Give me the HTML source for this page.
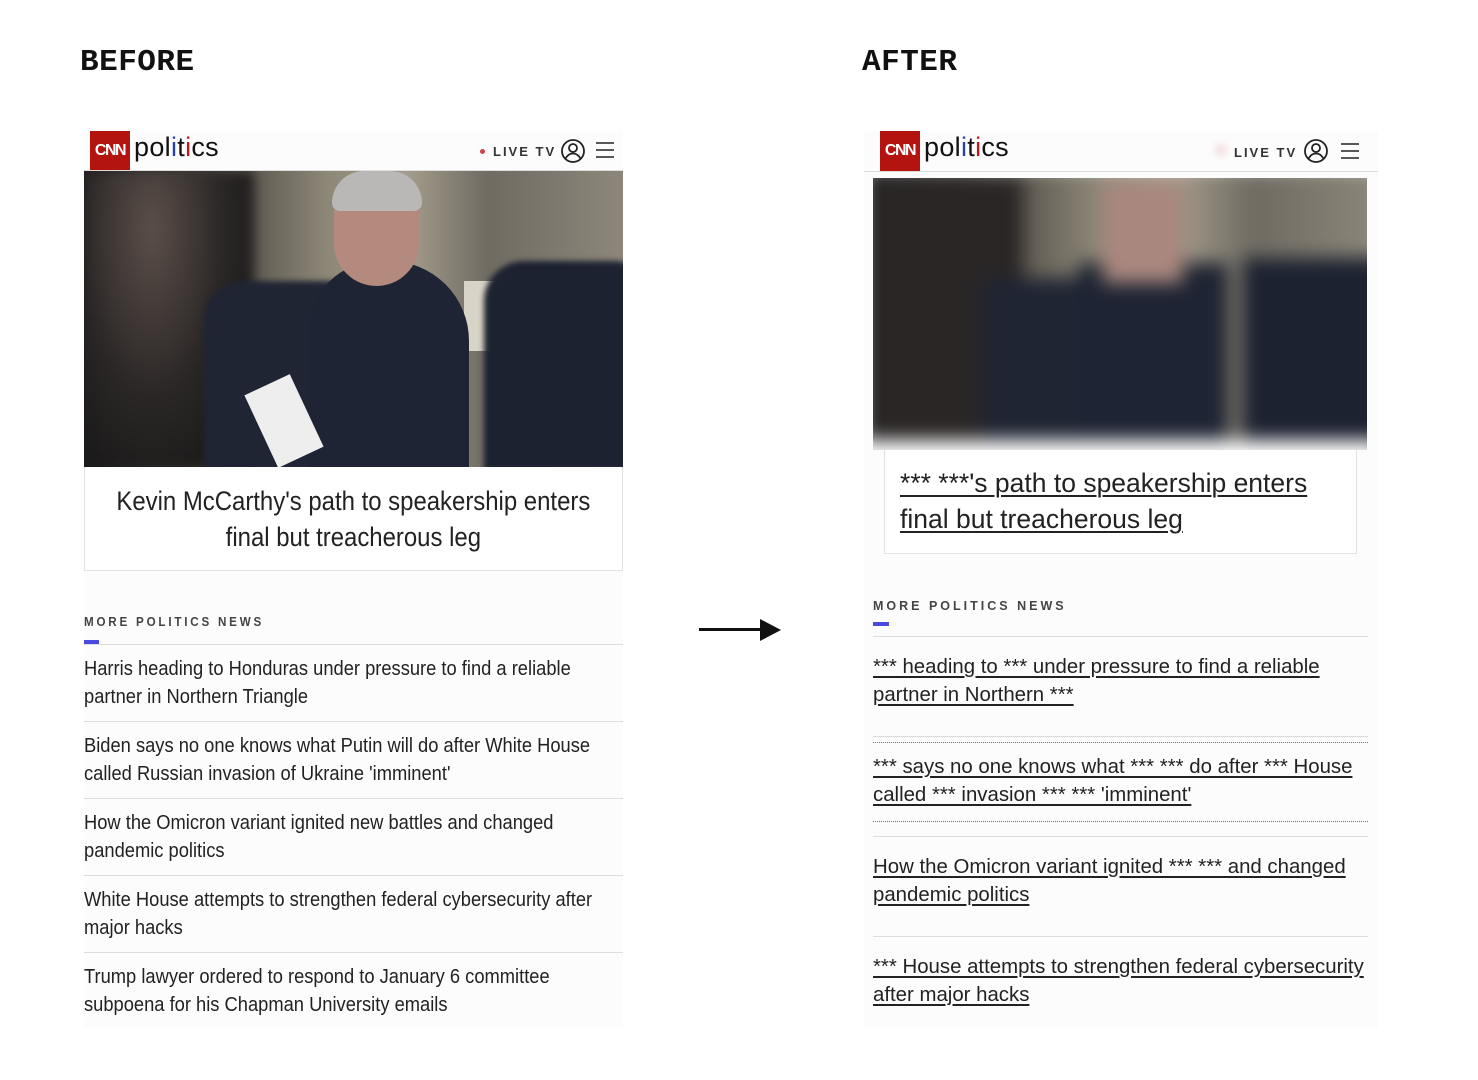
<!DOCTYPE html>
<html><head><meta charset="utf-8"><style>
*{margin:0;padding:0;box-sizing:border-box}
body{width:1478px;height:1080px;background:#fff;position:relative;overflow:hidden;font-family:"Liberation Sans",sans-serif;color:#222}
.a{position:absolute}
.title{font-family:"Liberation Mono",monospace;font-weight:bold;font-size:31px;color:#111;top:45px;letter-spacing:0.5px}
.panel{background:#fcfcfc}
.logo{background:#b3140f;color:#fff;font-weight:bold;font-size:16px;display:flex;align-items:center;justify-content:center;letter-spacing:-1.5px}
.pol{font-size:27px;color:#111;letter-spacing:0.3px}
.live{font-size:13px;font-weight:bold;letter-spacing:2px;color:#333}
.nar{transform:scaleX(0.916);transform-origin:0 0;white-space:nowrap}
.more{font-size:12.5px;font-weight:bold;letter-spacing:3px;color:#444}
.li{font-size:20px;line-height:28px;color:#222}
.u{text-decoration:underline;text-decoration-thickness:2px;text-underline-offset:3px}
.ai{font-size:20.4px;line-height:28px;color:#222;width:500px;white-space:nowrap}
</style></head><body>
<div class="a title" style="left:80px">BEFORE</div>
<div class="a title" style="left:862px">AFTER</div>

<!-- BEFORE -->
<div class="a panel" style="left:84px;top:131px;width:539px;height:897px"></div>
<div class="a logo" style="left:90px;top:131px;width:40px;height:39px">CNN</div>
<div class="a pol" style="left:134px;top:132px">pol<span style="color:#2a3fa8">i</span>t<span style="color:#c2151c">i</span>cs</div>
<div class="a" style="left:480px;top:149px;width:5px;height:5px;border-radius:50%;background:#c44"></div>
<div class="a live" style="left:493px;top:144px">LIVE TV</div>
<svg class="a" style="left:560px;top:138px" width="26" height="26" viewBox="0 0 26 26" fill="none" stroke="#222" stroke-width="1.8"><circle cx="13" cy="13" r="11"/><circle cx="13" cy="10" r="4"/><path d="M5.5 20.5c2-3.5 4.5-5 7.5-5s5.5 1.5 7.5 5"/></svg>
<svg class="a" style="left:595px;top:141px" width="20" height="18" stroke="#222" stroke-width="1.6"><path d="M1 2h18M1 9h18M1 16h18"/></svg>
<div class="a" style="left:84px;top:170px;width:539px;height:1px;background:#ddd"></div>
<div class="a" style="left:84px;top:171px;width:539px;height:297px;overflow:hidden;background:linear-gradient(90deg,#1d1d1f 0%,#3a3733 20%,#8d8778 45%,#a49c8c 60%,#6f6b62 75%,#8d877b 100%)">
 <div class="a" style="left:0;top:0;width:170px;height:297px;background:radial-gradient(ellipse at 40% 20%,#5b4f49 0%,#2a2626 50%,#111 100%);filter:blur(6px)"></div>
 <div class="a" style="left:380px;top:110px;width:40px;height:70px;background:#d8d4c8"></div>
 <div class="a" style="left:120px;top:110px;width:200px;height:190px;background:#1f2533;filter:blur(3px);border-radius:40px 40px 0 0"></div>
 <div class="a" style="left:400px;top:90px;width:170px;height:210px;background:#1c2230;filter:blur(3px);border-radius:40px 40px 0 0"></div>
 <div class="a" style="left:225px;top:90px;width:160px;height:220px;background:#1e2433;border-radius:70px 80px 0 0"></div>
 <div class="a" style="left:250px;top:5px;width:85px;height:110px;background:#b48a7e;border-radius:40px 40px 45px 45px"></div>
 <div class="a" style="left:248px;top:0;width:90px;height:40px;background:#b9b8b6;border-radius:40px 40px 10px 10px"></div>
 <div class="a" style="left:175px;top:210px;width:50px;height:80px;background:#eee;transform:rotate(-25deg)"></div>
</div>
<div class="a" style="left:84px;top:467px;width:539px;height:104px;border:1px solid #e2e2e2;border-top:none;background:#fff"></div>
<div class="a" style="left:84px;top:483px;width:608px;text-align:center;font-size:27px;line-height:36px;color:#222;transform:scaleX(0.886);transform-origin:0 0">Kevin McCarthy's path to speakership enters<br>final but treacherous leg</div>
<div class="a more" style="left:84px;top:615px;transform:scaleX(0.93);transform-origin:0 0">MORE POLITICS NEWS</div>
<div class="a" style="left:84px;top:640px;width:15px;height:4px;background:#4a4ae0"></div>
<div class="a" style="left:84px;top:644px;width:539px;height:1px;background:#ddd"></div>
<div class="a li nar" style="left:84px;top:655px">Harris heading to Honduras under pressure to find a reliable<br>partner in Northern Triangle</div>
<div class="a" style="left:84px;top:721px;width:539px;height:1px;background:#ddd"></div>
<div class="a li nar" style="left:84px;top:732px">Biden says no one knows what Putin will do after White House<br>called Russian invasion of Ukraine 'imminent'</div>
<div class="a" style="left:84px;top:798px;width:539px;height:1px;background:#ddd"></div>
<div class="a li nar" style="left:84px;top:809px">How the Omicron variant ignited new battles and changed<br>pandemic politics</div>
<div class="a" style="left:84px;top:875px;width:539px;height:1px;background:#ddd"></div>
<div class="a li nar" style="left:84px;top:886px">White House attempts to strengthen federal cybersecurity after<br>major hacks</div>
<div class="a" style="left:84px;top:952px;width:539px;height:1px;background:#ddd"></div>
<div class="a li nar" style="left:84px;top:963px">Trump lawyer ordered to respond to January 6 committee<br>subpoena for his Chapman University emails</div>

<!-- arrow -->
<div class="a" style="left:699px;top:628px;width:64px;height:3px;background:#111"></div>
<svg class="a" style="left:760px;top:619px" width="21" height="22"><path d="M0 0L21 11L0 22z" fill="#111"/></svg>

<!-- AFTER -->
<div class="a panel" style="left:864px;top:131px;width:514px;height:897px"></div>
<div class="a logo" style="left:880px;top:131px;width:40px;height:40px">CNN</div>
<div class="a pol" style="left:924px;top:132px">pol<span style="color:#2a3fa8">i</span>t<span style="color:#c2151c">i</span>cs</div>
<div class="a" style="left:1214px;top:143px;width:14px;height:14px;border-radius:50%;background:#f6e6e6;filter:blur(3px)"></div>
<div class="a live" style="left:1234px;top:145px">LIVE TV</div>
<svg class="a" style="left:1303px;top:138px" width="26" height="26" viewBox="0 0 26 26" fill="none" stroke="#222" stroke-width="1.8"><circle cx="13" cy="13" r="11"/><circle cx="13" cy="10" r="4"/><path d="M5.5 20.5c2-3.5 4.5-5 7.5-5s5.5 1.5 7.5 5"/></svg>
<svg class="a" style="left:1340px;top:142px" width="20" height="18" stroke="#222" stroke-width="1.6"><path d="M1 2h18M1 9h18M1 16h18"/></svg>
<div class="a" style="left:864px;top:171px;width:514px;height:1px;background:#ddd"></div>
<div class="a" style="left:873px;top:178px;width:494px;height:272px;overflow:hidden;background:#fcfcfc">
 <div style="position:absolute;inset:0;filter:blur(9px)">
  <div class="a" style="left:-10px;top:-10px;width:520px;height:300px;background:linear-gradient(90deg,#1d1d1f 0%,#3a3733 20%,#8d8778 45%,#a49c8c 60%,#6f6b62 75%,#8d877b 100%)"></div>
  <div class="a" style="left:0;top:0;width:150px;height:272px;background:#2a2626"></div>
  <div class="a" style="left:110px;top:100px;width:185px;height:180px;background:#1f2533"></div>
  <div class="a" style="left:370px;top:80px;width:150px;height:200px;background:#1c2230"></div>
  <div class="a" style="left:205px;top:85px;width:150px;height:200px;background:#1e2433"></div>
  <div class="a" style="left:230px;top:5px;width:80px;height:100px;background:#a9877e"></div>
  <div class="a" style="left:-10px;top:262px;width:520px;height:30px;background:#fcfcfc"></div>
 </div>
</div>
<div class="a" style="left:884px;top:450px;width:473px;height:104px;border:1px solid #e2e2e2;border-top:none;background:#fff"></div>
<div class="a u" style="left:900px;top:465px;font-size:26.5px;line-height:36px;color:#222">*** ***'s path to speakership enters<br>final but treacherous leg </div>
<div class="a more" style="left:873px;top:599px">MORE POLITICS NEWS</div>
<div class="a" style="left:873px;top:622px;width:16px;height:4px;background:#4a4ae0"></div>
<div class="a" style="left:873px;top:636px;width:495px;height:1px;background:#ddd"></div>
<div class="a ai u" style="left:873px;top:653px">*** heading to *** under pressure to find a reliable<br>partner in Northern ***</div>
<div class="a" style="left:873px;top:736px;width:495px;height:1px;background:#ddd"></div>
<div class="a" style="left:873px;top:742px;width:495px;border-top:1px dotted #777"></div>
<div class="a ai u" style="left:873px;top:753px">*** says no one knows what *** *** do after *** House<br>called *** invasion *** *** 'imminent'</div>
<div class="a" style="left:873px;top:821px;width:495px;border-top:1px dotted #777"></div>
<div class="a" style="left:873px;top:836px;width:495px;height:1px;background:#ddd"></div>
<div class="a ai u" style="left:873px;top:853px">How the Omicron variant ignited *** *** and changed<br>pandemic politics</div>
<div class="a" style="left:873px;top:936px;width:495px;height:1px;background:#ddd"></div>
<div class="a ai u" style="left:873px;top:953px">*** House attempts to strengthen federal cybersecurity<br>after major hacks</div>
</body></html>
